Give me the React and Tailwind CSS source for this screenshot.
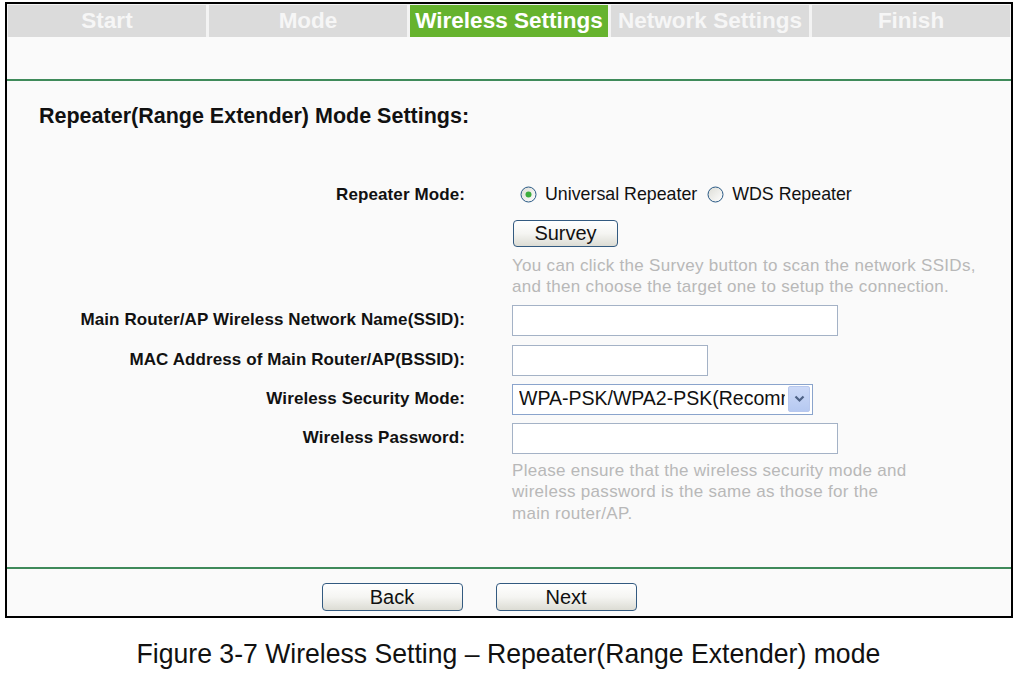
import React from "react";

function Radio({ checked, id }) {
  return (
    <svg width="17" height="17" viewBox="0 0 17 17" className="shrink-0">
      <defs>
        <linearGradient id={id} x1="0" y1="0" x2="1" y2="1">
          <stop offset="0" stopColor="#dcdcd5" />
          <stop offset="1" stopColor="#ffffff" />
        </linearGradient>
      </defs>
      <circle cx="8.5" cy="8.5" r="7.5" fill={`url(#${id})`} stroke="#2a5a86" strokeWidth="1" />
      {checked && <circle cx="8.5" cy="8.5" r="3" fill="#3cad3c" />}
    </svg>
  );
}

function Btn({ children, w, h }) {
  return (
    <button
      className={`${w} ${h} rounded-[4px] border border-[#335a80] bg-gradient-to-b from-[#ffffff] via-[#f5f5f2] to-[#dcdcd4] text-[20px] text-[#111] leading-none flex items-center justify-center`}
      style={{ fontFamily: '"Liberation Sans", Arial, sans-serif' }}
    >
      {children}
    </button>
  );
}

function Row({ label, mt, children }) {
  return (
    <div className={`flex items-center ${mt}`}>
      <div className="w-[458px] shrink-0 text-right text-[17px] font-bold text-[#111] tracking-[0.1px] whitespace-nowrap">
        {label}
      </div>
      <div className="ml-[47px]">{children}</div>
    </div>
  );
}

const Hint = ({ mt, lh, children }) => (
  <div className={`${mt} ml-[505px] text-[17px] ${lh} tracking-[0.3px] text-[#b8b8b8] whitespace-nowrap`}>
    {children}
  </div>
);

export default function App() {
  const tabs = ["Start", "Mode", "Wireless Settings", "Network Settings", "Finish"];
  return (
    <div
      className="w-[1018px] h-[673px] bg-white overflow-hidden"
      style={{ fontFamily: '"Liberation Sans", Arial, sans-serif' }}
    >
      <div className="ml-[5px] mt-[2px] w-[1008px] h-[616px] border-2 border-black bg-[#fafafa] flex flex-col">
        <div className="flex gap-[3px] pl-[1px] pr-[1px] pt-[1px] bg-[#f3f3f3]">
          {tabs.map((t, i) => (
            <div
              key={t}
              className={`flex-1 h-[32px] flex items-center justify-center text-[22.5px] font-bold whitespace-nowrap overflow-hidden ${
                i === 2 ? "bg-[#66b32e] text-white" : "bg-[#dbdbdb] text-[#f6f6f6]"
              }`}
            >
              {t}
            </div>
          ))}
        </div>
        <div className="h-[42px] bg-[#fafafa]" />
        <div className="h-[2px] bg-[#3f8a5a]" />
        <div className="pl-[32px] mt-[23px] h-[24px] flex items-center text-[21.5px] font-bold text-[#111] whitespace-nowrap">
          Repeater(Range Extender) Mode Settings:
        </div>

        <Row label="Repeater Mode:" mt="mt-[54px]">
          <div className="h-[24px] flex items-center text-[17.8px] text-[#111]">
            <div className="ml-[8px] flex items-center gap-[8px]">
              <Radio checked id="r1" />
              <span>Universal Repeater</span>
            </div>
            <div className="ml-[10px] flex items-center gap-[8px]">
              <Radio id="r2" />
              <span>WDS Repeater</span>
            </div>
          </div>
        </Row>

        <div className="mt-[12px] ml-[506px]">
          <Btn w="w-[105px]" h="h-[27px]">Survey</Btn>
        </div>

        <Hint mt="mt-[8px]" lh="leading-[21px]">
          You can click the Survey button to scan the network SSIDs,
          <br />
          and then choose the target one to setup the connection.
        </Hint>

        <Row label="Main Router/AP Wireless Network Name(SSID):" mt="mt-[8px]">
          <div className="w-[326px] h-[31px] border border-[#a4b2c6] bg-white" />
        </Row>

        <Row label="MAC Address of Main Router/AP(BSSID):" mt="mt-[9px]">
          <div className="w-[196px] h-[31px] border border-[#a4b2c6] bg-white" />
        </Row>

        <Row label="Wireless Security Mode:" mt="mt-[8px]">
          <div className="w-[301px] h-[31px] border border-[#8aa4cc] bg-white flex items-center pl-[6px] pr-[2px]">
            <span className="flex-1 overflow-hidden whitespace-nowrap text-[19.5px] text-[#111] leading-none">
              WPA-PSK/WPA2-PSK(Recommended)
            </span>
            <div className="w-[22px] h-[26px] ml-[3px] bg-gradient-to-b from-[#ccd9f7] to-[#b6c9f1] border border-[#b8c8ee] rounded-[2px] flex items-center justify-center">
              <svg width="11" height="8" viewBox="0 0 11 8">
                <path d="M1.5 1.5 L5.5 5.5 L9.5 1.5" fill="none" stroke="#4d6185" strokeWidth="2.2" />
              </svg>
            </div>
          </div>
        </Row>

        <Row label="Wireless Password:" mt="mt-[8px]">
          <div className="w-[326px] h-[31px] border border-[#a4b2c6] bg-white" />
        </Row>

        <Hint mt="mt-[6px]" lh="leading-[21.5px]">
          Please ensure that the wireless security mode and
          <br />
          wireless password is the same as those for the
          <br />
          main router/AP.
        </Hint>

        <div className="flex-1" />
        <div className="h-[2px] bg-[#3f8a5a]" />
        <div className="h-[14px]" />
        <div className="flex justify-center">
          <div className="flex gap-[33px] mr-[60px]">
            <Btn w="w-[141px]" h="h-[28px]">Back</Btn>
            <Btn w="w-[141px]" h="h-[28px]">Next</Btn>
          </div>
        </div>
        <div className="h-[5px]" />
      </div>
      <div className="mt-[20px] h-[32px] flex items-center justify-center">
        <div className="text-[28px] text-[#111] whitespace-nowrap scale-x-[0.95] mr-[1px]">
          Figure 3-7 Wireless Setting – Repeater(Range Extender) mode
        </div>
      </div>
    </div>
  );
}
